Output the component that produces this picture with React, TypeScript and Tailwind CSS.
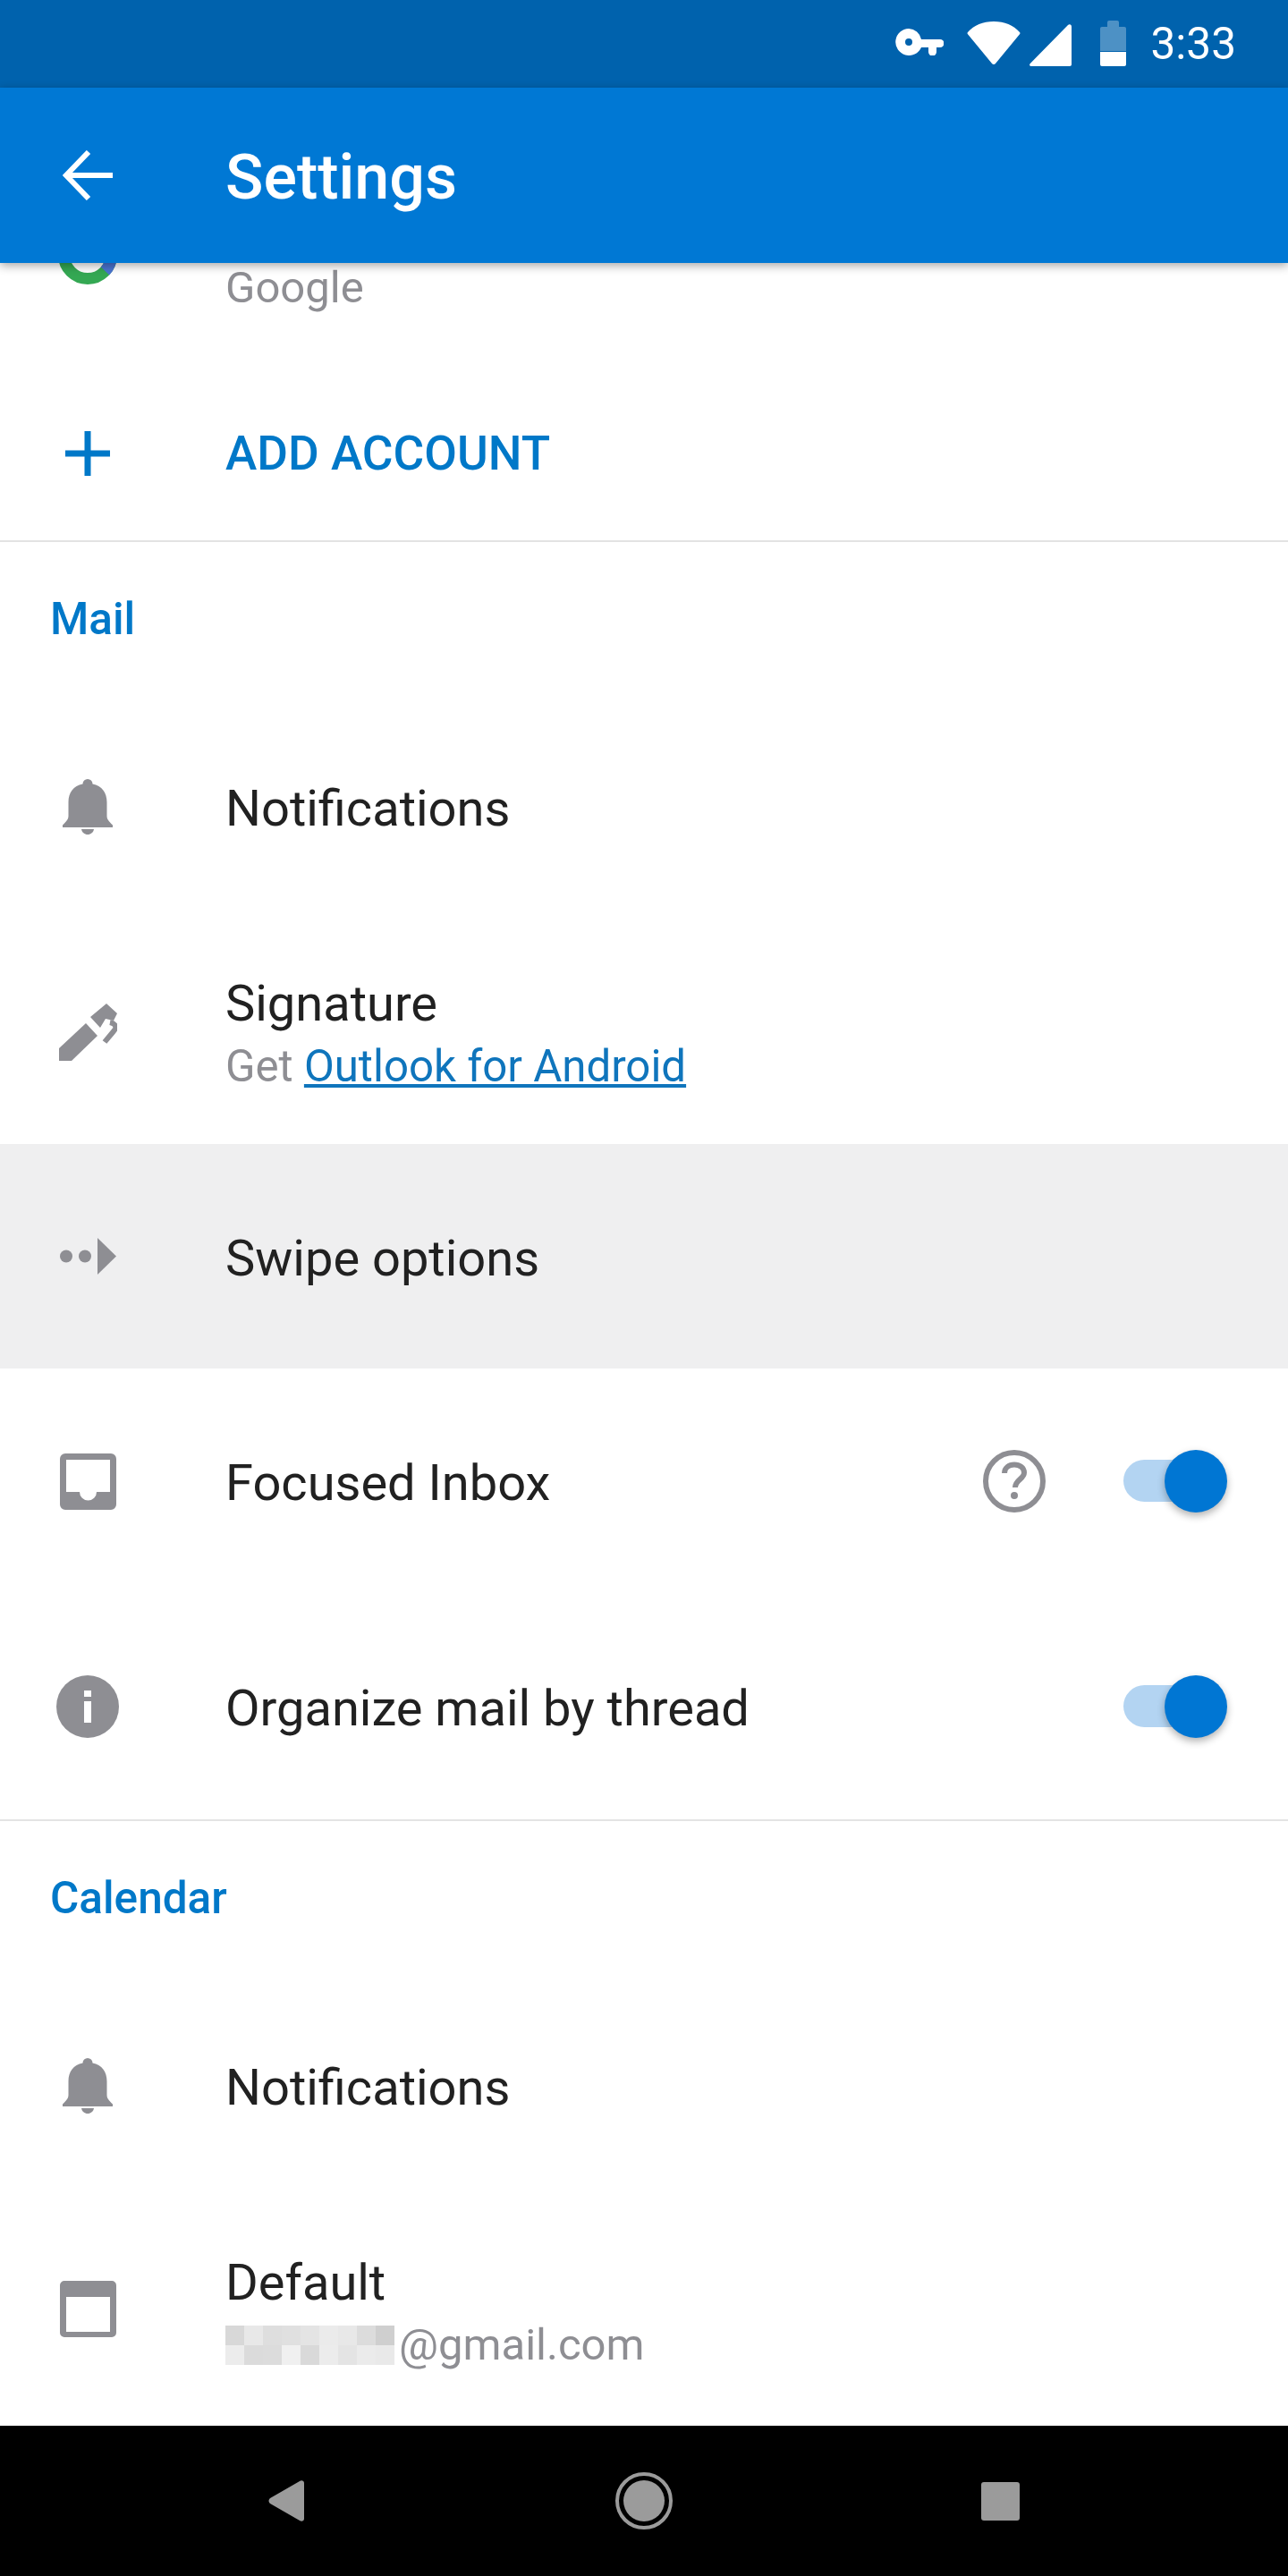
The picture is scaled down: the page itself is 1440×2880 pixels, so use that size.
import type { ReactNode } from "react";

const blurTop = ["bg-[#d8d8d8]", "bg-[#e8e8e8]", "bg-[#dedede]", "bg-[#e0e0e0]", "bg-[#e4e4e4]", "bg-[#ebebeb]", "bg-[#e8e8e8]", "bg-[#dcdcdc]", "bg-[#cfcfcf]"];
const blurBottom = ["bg-[#ececec]", "bg-[#dbdbdb]", "bg-[#dcdcdc]", "bg-[#f0f0f0]", "bg-[#d9d9d9]", "bg-[#ececec]", "bg-[#e4e4e4]", "bg-[#ebebeb]", "bg-[#e9e9e9]"];

function StatusBar() {
  return (
    <div className="flex h-[98px] shrink-0 items-center justify-end bg-[#0062ad] pr-[58px] text-white">
      <svg width="54" height="30" viewBox="0 0 54 30" fill="#fff" className="mr-[26px] mt-[-4px]">
        <path fillRule="evenodd" d="M15 0a15 15 0 0 1 14 12h21a4.5 4.5 0 0 1 0 9h-4v5a4.5 4.5 0 0 1-9 0v-5h-8A15 15 0 1 1 15 0Zm0 11a4 4 0 1 0 0 8 4 4 0 0 0 0-8Z" />
      </svg>
      <svg width="60" height="50" viewBox="0 0 60 50" fill="#fff" className="mr-[10px] mt-[-2px]">
        <path d="M1 13C8 5 18 1 30 1s22 4 29 12c.6.8.6 1.500 0 2.200L32 48c-1 1.200-3 1.200-4 0L1 15.200c-.6-.7-.6-1.400 0-2.200Z" />
      </svg>
      <svg width="47" height="47" viewBox="0 0 47 47" fill="#fff" className="mr-[32px] mt-[2px]">
        <path d="M43 1c2-1.500 4-.5 4 2v42c0 1.200-.8 2-2 2H2c-2 0-2.500-1.800-1.200-3Z" />
      </svg>
      <div className="mr-[28px] mt-[-1px] flex h-[51px] w-[29px] flex-col items-center">
        <div className="h-[7px] w-[13px] rounded-t-[2px] bg-white/30" />
        <div className="h-[27px] w-full rounded-t-[2px] bg-white/30" />
        <div className="mt-[1px] h-[16px] w-full rounded-b-[2px] bg-white" />
      </div>
      <span className="mt-[2px] text-[49.5px] leading-none">3:33</span>
    </div>
  );
}

function AppBar() {
  return (
    <div className="relative z-10 flex h-[196px] shrink-0 items-center bg-[#0078d4] shadow-[0_3px_10px_rgba(0,0,0,0.35)]">
      <div className="flex w-[196px] justify-center">
        <svg width="56" height="56" viewBox="0 0 56 56" fill="none" stroke="#fff" strokeWidth="6">
          <path d="M56 28H5M29 2 4 28l25 26" />
        </svg>
      </div>
      <span className="ml-[56px] mt-[4px] text-[70px] font-medium leading-none text-white">Settings</span>
    </div>
  );
}

function Row({ icon, children, className = "", right }: { icon?: ReactNode; children: ReactNode; className?: string; right?: ReactNode }) {
  return (
    <div className={`flex items-center ${className}`}>
      <div className="flex w-[196px] shrink-0 justify-center">{icon}</div>
      <div className="ml-[56px] min-w-0 flex-1">{children}</div>
      {right}
    </div>
  );
}

function Section({ title }: { title: string }) {
  return (
    <div className="flex h-[172px] items-center border-t-2 border-[#e3e3e3] pl-[56px] pt-[2px] text-[49.500px] font-medium text-[#0078c8]">
      {title}
    </div>
  );
}

function Title({ children }: { children: ReactNode }) {
  return <div className="mt-[4px] text-[56px] leading-none">{children}</div>;
}

function Toggle() {
  return (
    <div className="relative h-[70px] w-[116px]">
      <div className="absolute left-0 top-[11px] h-[47px] w-[90px] rounded-full bg-[#b3d4f2]" />
      <div className="absolute right-0 top-0 h-[70px] w-[70px] rounded-full bg-[#0076d3] shadow-[0_4px_8px_rgba(0,0,0,0.3)]" />
    </div>
  );
}

function BellIcon() {
  return (
    <svg width="56" height="62" viewBox="0 0 56 62" fill="#8e8e93">
      <path d="M28 0a5.500 5.500 0 0 1 5.500 5.500C44 7.500 49.500 15 49.500 26v15c0 4 2 6 6.500 10.500V54H0v-2.500C4.500 47 6.500 45 6.500 41V26C6.500 15 12 7.500 22.500 5.500A5.500 5.500 0 0 1 28 0Z" />
      <path d="M21 56h14c-.5 3.500-3.500 6-7 6s-6.500-2.500-7-6Z" />
    </svg>
  );
}

function PenIcon() {
  return (
    <svg width="65" height="64" viewBox="0 0 65 64" fill="#8e8e93">
      <path d="M0 50 30 22l13 14L14 64H0Z" />
      <path d="M35 15 53 0l12 11-4 8-9-2-6 10Z" />
      <path d="M57 21c5 1 7 4 6 7-1 2-8 10-12 15" fill="none" stroke="#8e8e93" strokeWidth="6" />
    </svg>
  );
}

function SwipeIcon() {
  return (
    <svg width="63" height="41" viewBox="0 0 63 41" fill="#8e8e93">
      <ellipse cx="7" cy="20.500" rx="7" ry="7" />
      <ellipse cx="28" cy="20.500" rx="7" ry="7" />
      <path d="M42 0 63 20.500 42 41Z" />
    </svg>
  );
}

function InboxIcon() {
  return (
    <svg width="63" height="63" viewBox="0 0 63 63" fill="#8e8e93">
      <path fillRule="evenodd" d="M6 0h51a6 6 0 0 1 6 6v51a6 6 0 0 1-6 6H6a6 6 0 0 1-6-6V6a6 6 0 0 1 6-6Zm1 7v36h15a9.500 9.500 0 0 0 19 0h15V7Z" />
    </svg>
  );
}

function InfoIcon() {
  return (
    <svg width="70" height="70" viewBox="0 0 70 70">
      <circle cx="35" cy="35" r="35" fill="#8e8e93" />
      <rect x="31" y="17" width="8" height="7" fill="#fff" />
      <rect x="31" y="29" width="8" height="24" fill="#fff" />
    </svg>
  );
}

function CalendarIcon() {
  return (
    <svg width="63" height="63" viewBox="0 0 63 63" fill="#8e8e93" className="mt-[-7px]">
      <path fillRule="evenodd" d="M5 0h53a5 5 0 0 1 5 5v53a5 5 0 0 1-5 5H5a5 5 0 0 1-5-5V5a5 5 0 0 1 5-5Zm2 18v39h49V18Z" />
    </svg>
  );
}

function HelpIcon() {
  return (
    <svg width="70" height="70" viewBox="0 0 70 70" fill="none" className="mr-[87px]">
      <circle cx="35" cy="35" r="32" stroke="#8e8e93" strokeWidth="6" />
      <path d="M24 26c0-6 5-9.500 11-9.500s11 3.500 11 9c0 7-10 8-10 16.500" stroke="#8e8e93" strokeWidth="6" />
      <circle cx="35" cy="51" r="4" fill="#8e8e93" />
    </svg>
  );
}

function GoogleRing() {
  return (
    <svg width="66" height="66" viewBox="0 0 66 66" fill="none" className="mt-[-100px]">
      <circle cx="33" cy="33" r="26.500" stroke="#34a853" strokeWidth="13" />
      <path d="M59.500 33a26.500 26.500 0 0 1-7 18" stroke="#4a74d0" strokeWidth="13" />
    </svg>
  );
}

export default function App() {
  return (
    <div className="flex h-[2880px] w-[1440px] flex-col overflow-hidden bg-white font-['Roboto',sans-serif] text-[#212121]">
      <StatusBar />
      <AppBar />
      <div className="min-h-0 flex-1">
        <Row icon={<GoogleRing />} className="h-[116px]">
          <div className="mt-[-60px] text-[49px] leading-[70px] text-[#8e8e93]">Google</div>
        </Row>
        <Row
          className="h-[194px]"
          icon={
            <svg width="50" height="50" viewBox="0 0 50 50" stroke="#0078c8" strokeWidth="7" fill="none">
              <path d="M25 0v50M0 25h50" />
            </svg>
          }
        >
          <div className="mt-[2px] text-[53.200px] font-medium leading-none text-[#0078c8]">ADD ACCOUNT</div>
        </Row>
        <Section title="Mail" />
        <Row icon={<BellIcon />} className="h-[252px]">
          <Title>Notifications</Title>
        </Row>
        <Row icon={<PenIcon />} className="h-[251px]">
          <div className="pt-[6px]">
            <div className="text-[56px] leading-[70px]">Signature</div>
            <div className="text-[49.200px] leading-[70px] text-[#8e8e93]">
              Get <span className="text-[#0f75bc] underline">Outlook for Android</span>
            </div>
          </div>
        </Row>
        <Row icon={<SwipeIcon />} className="h-[251px] bg-[#efeff0]">
          <Title>Swipe options</Title>
        </Row>
        <Row
          icon={<InboxIcon />}
          className="h-[252px] pr-[68px]"
          right={
            <>
              <HelpIcon />
              <Toggle />
            </>
          }
        >
          <Title>Focused Inbox</Title>
        </Row>
        <Row icon={<InfoIcon />} className="h-[252px] pr-[68px]" right={<Toggle />}>
          <Title>Organize mail by thread</Title>
        </Row>
        <Section title="Calendar" />
        <Row icon={<BellIcon />} className="h-[252px]">
          <Title>Notifications</Title>
        </Row>
        <Row icon={<CalendarIcon />} className="h-[254px]">
          <div className="pt-[4px]">
            <div className="text-[56px] leading-[70px]">Default</div>
            <div className="flex h-[70px] items-center text-[49px] text-[#8e8e93]">
              <div className="mr-[5px] w-[189px]">
                <div className="flex h-[22px]">
                  {blurTop.map((c, i) => (
                    <div key={i} className={`h-full flex-1 ${c}`} />
                  ))}
                </div>
                <div className="flex h-[22px]">
                  {blurBottom.map((c, i) => (
                    <div key={i} className={`h-full flex-1 ${c}`} />
                  ))}
                </div>
              </div>
              @gmail.com
            </div>
          </div>
        </Row>
      </div>
      <div className="flex h-[168px] shrink-0 items-center justify-between bg-black px-[288px]">
        <svg width="64" height="46" viewBox="0 0 64 46" fill="#9b9b9b">
          <path d="M14 20 47 1c2-1.500 5-.5 5 2v40c0 2.500-3 3.500-5 2L14 26c-2-1.700-2-4.300 0-6Z" />
        </svg>
        <svg width="64" height="64" viewBox="0 0 64 64" fill="#9b9b9b">
          <circle cx="32" cy="32" r="30" fill="none" stroke="#9b9b9b" strokeWidth="4" />
          <circle cx="32" cy="32" r="23" />
        </svg>
        <svg width="64" height="43" viewBox="0 0 64 43" fill="#9b9b9b">
          <rect x="9" width="43" height="43" rx="3" />
        </svg>
      </div>
    </div>
  );
}
